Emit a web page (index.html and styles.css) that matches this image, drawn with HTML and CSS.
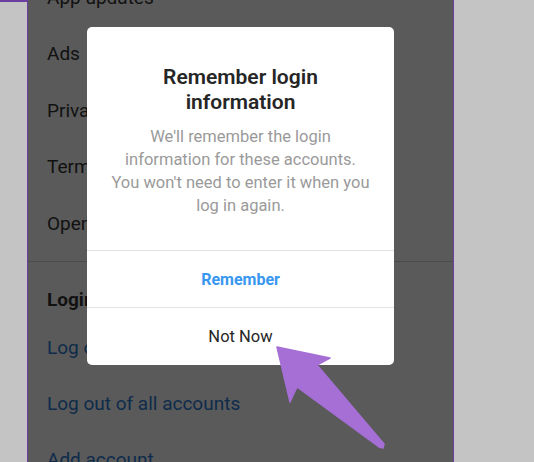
FILE: index.html
```html
<!DOCTYPE html>
<html>
<head>
<meta charset="utf-8">
<link rel="stylesheet" href="styles.css">
</head>
<body>
<div class="screen">
  <div class="side side-left"></div>
  <div class="panel">
    <div class="section">
      <div class="item">App updates</div>
      <div class="item">Ads</div>
      <div class="item">Privacy and security</div>
      <div class="item">Terms of Service</div>
      <div class="item">Open source libraries</div>
    </div>
    <div class="divider"></div>
    <div class="section2">
      <div class="header">Logins</div>
      <div class="item link">Log out of Instagram</div>
      <div class="item link">Log out of all accounts</div>
      <div class="item link">Add account</div>
    </div>
  </div>
  <div class="side side-right"></div>

  <div class="dialog">
    <div class="dialog-body">
      <div class="dialog-title">Remember login<br>information</div>
      <div class="dialog-text">We'll remember the login<br>information for these accounts.<br>You won't need to enter it when you<br>log in again.</div>
    </div>
    <div class="dialog-btn primary">Remember</div>
    <div class="dialog-btn">Not Now</div>
  </div>

  <svg class="arrow" width="534" height="462" viewBox="0 0 534 462">
    <polygon points="277,347 330,358 317,365 384,444 383,448 379,447 297,387 290,402" fill="#a56fd5" stroke="#a56fd5" stroke-width="1.5" stroke-linejoin="round"/>
  </svg>
</div>
</body>
</html>
```
FILE: styles.css
```css
html, body {
  margin: 0;
  padding: 0;
}
body {
  width: 534px;
  height: 462px;
  overflow: hidden;
  font-family: Roboto, "Noto Sans", "Liberation Sans", sans-serif;
}
.screen {
  position: relative;
  display: flex;
  width: 534px;
  height: 462px;
  overflow: hidden;
}
.side {
  background: #c4c4c4;
}
.side-left {
  width: 27px;
  border-top: 2px solid #6a3fa0;
  box-sizing: border-box;
}
.side-right {
  flex: 1;
}
.panel {
  width: 425px;
  background: #5a5a5a;
  border-left: 1px solid #6a3f9e;
  border-right: 1px solid #6a3f9e;
  overflow: hidden;
}
.section {
  margin-top: -31px;
  padding-bottom: 9px;
}
.item {
  height: 56.5px;
  display: flex;
  align-items: center;
  padding-left: 19px;
  font-size: 19px;
  color: #111;
  white-space: nowrap;
}
.divider {
  height: 1px;
  background: #4b4b4b;
}
.section2 .item {
  height: 56px;
}
.header {
  padding: 26px 0 8px 19px;
  height: 24px;
  line-height: 24px;
  font-size: 19px;
  font-weight: 700;
  color: #111;
}
.item.link {
  color: #0e2b4b;
}
.dialog {
  position: absolute;
  left: 87px;
  top: 27px;
  width: 307px;
  height: 338px;
  background: #fff;
  border-radius: 5px;
  display: flex;
  flex-direction: column;
  text-align: center;
}
.dialog-body {
  padding: 38px 0 0;
  height: 224px;
  flex-shrink: 0;
  box-sizing: border-box;
  border-bottom: 1px solid #e2e2e2;
}
.dialog-title {
  font-size: 21px;
  line-height: 25px;
  font-weight: 600;
  color: #262626;
}
.dialog-text {
  margin-top: 10px;
  font-size: 16.5px;
  line-height: 23px;
  color: #9a9a9a;
  white-space: nowrap;
}
.dialog-btn {
  height: 57px;
  flex-shrink: 0;
  display: flex;
  align-items: center;
  justify-content: center;
  font-size: 16.5px;
  color: #262626;
  box-sizing: border-box;
}
.dialog-btn.primary {
  color: #3897f0;
  font-weight: 700;
  font-size: 16px;
  border-bottom: 1px solid #e2e2e2;
}
.arrow {
  position: absolute;
  left: 0;
  top: 0;
}
```
